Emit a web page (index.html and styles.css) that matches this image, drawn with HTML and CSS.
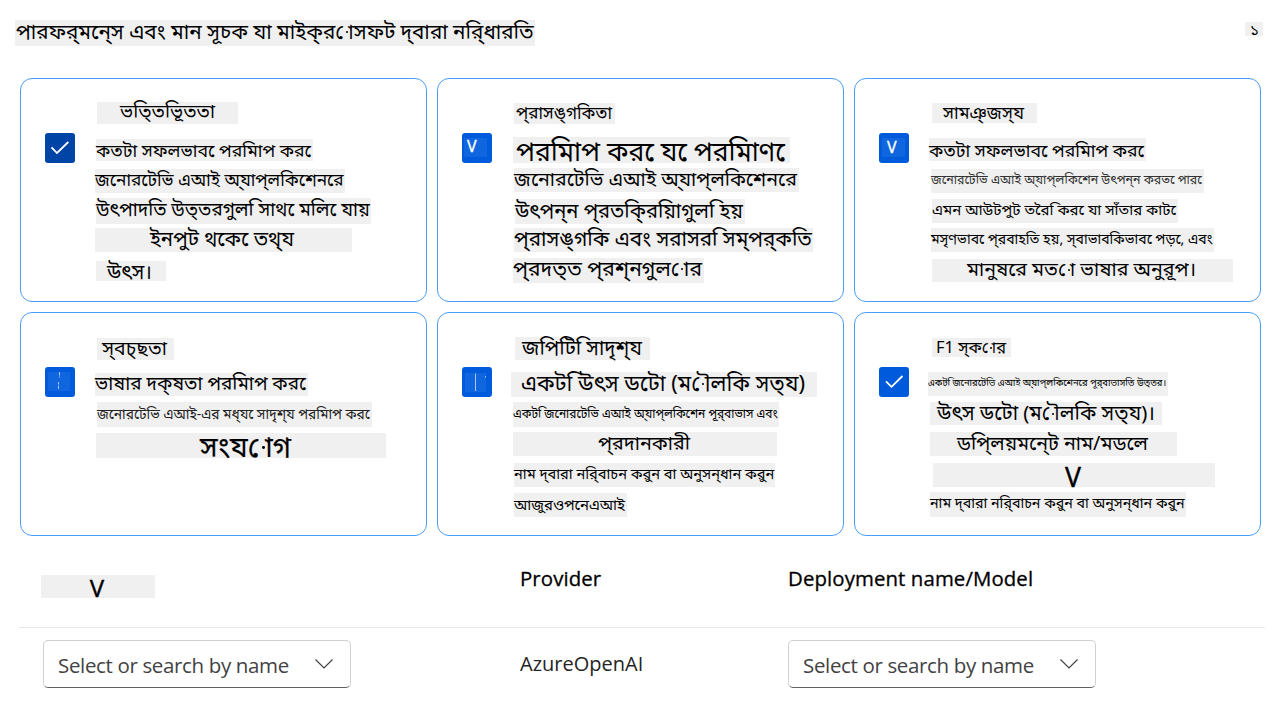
FILE: index.html
```html
<!DOCTYPE html>
<html lang="bn">
<head>
<meta charset="utf-8">
<title>পারফরমেন্স এবং মান সূচক</title>
<link rel="stylesheet" href="styles.css">
</head>
<body>
<header class="top">
  <h1 class="title">পারফর্&zwnj;মনে্স এবং মান সূচক যা মাইক্&zwnj;র<i class="o">&nbsp;ো</i>সফট দ্&zwnj;বারা নরি্ধারতি</h1>
  <span class="page">১</span>
</header>
<main class="cards">
  <section class="card">
    <span class="box dark"><svg viewBox="0 0 30 30"><path d="M6.500 14.300L12 20L23.300 9"/></svg></span>
    <div class="lines">
      <p class="a1">ভতি্তভিূততা</p>
      <p class="a2">কতটা সফলভাব&nbsp;েপরমিাপ কর<i class="e">&nbsp;ে</i></p>
      <p class="a3">জনোরটেভি এআই অ্&zwnj;যাপ্&zwnj;লকিশেনরে</p>
      <p class="a4">উৎপাদতি উত্&zwnj;তরগুল&nbsp;িসাথ&nbsp;েমলি&nbsp;েযায়</p>
      <p class="a5">ইনপুট থকে&nbsp;েতথ্&zwnj;য</p>
      <p class="a6">উৎস।</p>
    </div>
  </section>
  <section class="card">
    <span class="box"><b class="vee">V</b></span>
    <div class="lines">
      <p class="b1">প্&zwnj;রাসঙ্&zwnj;গকিতা</p>
      <p class="b2">পরমিাপ কর&nbsp;েয&nbsp;েপরমিাণ<i class="e">&nbsp;ে</i></p>
      <p class="b3">জনোরটেভি এআই অ্&zwnj;যাপ্&zwnj;লকিশেনরে</p>
      <p class="b4">উৎপন্&zwnj;ন প্&zwnj;রতকি্রয়িাগুল&nbsp;িহয়</p>
      <p class="b5">প্&zwnj;রাসঙ্&zwnj;গকি এবং সরাসর&nbsp;িসম্&zwnj;পর্&zwnj;কতি</p>
      <p class="b6">প্&zwnj;রদত্&zwnj;ত প্&zwnj;রশ্&zwnj;নগুল<i class="o">&nbsp;ো</i>র</p>
    </div>
  </section>
  <section class="card">
    <span class="box"><b class="vee right">V</b></span>
    <div class="lines">
      <p class="c1">সামঞ্&zwnj;জস্&zwnj;য</p>
      <p class="c2">কতটা সফলভাব&nbsp;েপরমিাপ কর<i class="e">&nbsp;ে</i></p>
      <p class="c3">জনোরটেভি এআই অ্&zwnj;যাপ্&zwnj;লকিশেন উৎপন্&zwnj;ন করত&nbsp;েপার<i class="e">&nbsp;ে</i></p>
      <p class="c4">এমন আউটপুট তরৈ&nbsp;িকর&nbsp;েযা সাঁতার কাট<i class="e">&nbsp;ে</i></p>
      <p class="c5">মসৃণভাব&nbsp;েপ্&zwnj;রবাহতি হয়, স্&zwnj;বাভাবকিভাব&nbsp;েপড়<i class="e">&nbsp;ে</i>, এবং</p>
      <p class="c6">মানুষরে মত<i class="o">&nbsp;ো</i> ভাষার অনুরূপ।</p>
    </div>
  </section>
  <section class="card">
    <span class="box"><svg viewBox="0 0 30 30"><rect class="patch" x="3" y="5" width="22" height="19"/><path class="thin" d="M14.500 5v3.500M14.500 9.500v1M13.500 15v2.500M13.500 18.500v3.500"/></svg></span>
    <div class="lines">
      <p class="d1">স্&zwnj;বচ্&zwnj;ছতা</p>
      <p class="d2">ভাষার দক্&zwnj;ষতা পরমিাপ কর<i class="e">&nbsp;ে</i></p>
      <p class="d3">জনোরটেভি এআই-এর মধ্&zwnj;য&nbsp;েসাদৃশ্&zwnj;য পরমিাপ কর<i class="e">&nbsp;ে</i></p>
      <p class="d4">সংয<i class="o">&nbsp;ো</i>গ</p>
    </div>
  </section>
  <section class="card">
    <span class="box"><svg viewBox="0 0 30 30"><rect class="patch" x="3" y="6" width="21" height="19"/><path class="thin" d="M13.500 6.500v17.500M23.500 9v1.500"/></svg></span>
    <div class="lines">
      <p class="e1">জপিটি&nbsp;িসাদৃশ্&zwnj;য</p>
      <p class="e2">একট&nbsp;িউৎস ডটো (ম<i class="o">&nbsp;ৌ</i>লকি সত্&zwnj;য)</p>
      <p class="e3">একট&nbsp;িজনোরটেভি এআই অ্&zwnj;যাপ্&zwnj;লকিশেন পূর্&zwnj;বাভাস এবং</p>
      <p class="e4">প্&zwnj;রদানকারী</p>
      <p class="e5">নাম দ্&zwnj;বারা নরি্বাচন করুন বা অনুসন্&zwnj;ধান করুন</p>
      <p class="e6">আজুরওপনেএআই</p>
    </div>
  </section>
  <section class="card">
    <span class="box"><svg viewBox="0 0 30 30"><path d="M7 14.300L12.500 19.800L23.500 9"/></svg></span>
    <div class="lines">
      <p class="f1">F1 স্&zwnj;ক<i class="o">&nbsp;ো</i>র</p>
      <p class="f2">একট&nbsp;িজনোরটেভি এআই অ্&zwnj;যাপ্&zwnj;লকিশেনরে পূর্&zwnj;বাভাসতি উত্&zwnj;তর।</p>
      <p class="f3">উৎস ডটো (ম<i class="o">&nbsp;ৌ</i>লকি সত্&zwnj;য)।</p>
      <p class="f4">ডপি্লয়মনে্ট নাম/মডলে</p>
      <p class="f5">V</p>
      <p class="f6">নাম দ্&zwnj;বারা নরি্বাচন করুন বা অনুসন্&zwnj;ধান করুন</p>
    </div>
  </section>
</main>
<section class="table" lang="en">
  <div class="row head">
    <div><span class="tag">V</span></div>
    <div class="th">Provider</div>
    <div class="th">Deployment name/Model</div>
  </div>
  <div class="row body">
    <div class="select"><span>Select or search by name</span><svg viewBox="0 0 18 10"><path d="M.5.500L9 9L17.500.500"/></svg></div>
    <div class="td">AzureOpenAI</div>
    <div class="select"><span>Select or search by name</span><svg viewBox="0 0 18 10"><path d="M.5.500L9 9L17.500.500"/></svg></div>
  </div>
</section>
</body>
</html>
```
FILE: styles.css
```css
* { box-sizing: border-box; }
body {
  margin: 0;
  font-family: "Noto Sans", "Noto Sans Bengali", sans-serif;
  color: #000;
  background: #fff;
  font-feature-settings: "blws" 0, "pres" 0, "psts" 0, "abvs" 0, "akhn" 0;
}
i { font-style: normal; }

/* detached vowel signs */
.e { margin-right: -.26em; }
.o { position: relative; }
.o::before {
  content: "";
  position: absolute;
  left: .5em;
  bottom: .56em;
  width: .1em;
  height: .1em;
  min-width: 2px;
  min-height: 2px;
  border-radius: 50%;
  background: #000;
}

.top { display: flex; justify-content: space-between; height: 78px; padding: 20px 25px 0 15px; }
.title, .page, .lines p {
  line-height: calc(2 * (var(--b) - .388em));
  white-space: nowrap;
  background: #f0f0f0;
}
.title { margin: 0; width: 520px; height: 26px; padding-left: 1px; font-size: 20.71px; font-weight: 400; --b: 20px; }
.page { width: 18px; height: 14px; margin-top: 2px; padding-left: 5px; font-size: 15px; --b: 14px; }

.cards { display: grid; grid-template-columns: repeat(3, 407px); grid-auto-rows: 224px; gap: 10px; padding-left: 20px; }
.card { display: flex; border: 1px solid #479ef5; border-radius: 12px; }
.box { flex: none; width: 30px; height: 30px; margin: 54px 19px 0 24px; background: #005bdc; border-radius: 3px; color: #fff; }
.box svg { display: block; width: 30px; height: 30px; }
.box path { fill: none; stroke: #fff; stroke-width: 1.8; }
.box .thin { stroke-width: 1; stroke: #a9c8f3; }
.patch { fill: #1066df; }
.dark { background: #0044a6; }
.vee { display: block; width: 23px; height: 19px; margin: 5px 0 0 2px; padding-left: 3px; background: #1066df; font-size: 16px; font-weight: 400; line-height: 17px; -webkit-text-stroke: .3px #fff; }
.vee.right { margin-left: 3px; padding-left: 5px; line-height: 19px; }

.lines p { margin: 0; }
.lines .a1 { margin: 23px 0 0 3px; width: 141px; height: 22px; padding-left: 23px; font-size: 18.89px; --b: 17px; }
.lines .a2 { margin: 15px 0 0 2px; width: 217px; height: 22px; font-size: 17.69px; --b: 18px; }
.lines .a3 { margin: 8px 0 0 1px; width: 250px; height: 24px; font-size: 17.25px; --b: 18px; }
.lines .a4 { margin: 5px 0 0 2px; width: 275px; height: 26px; font-size: 18.85px; --b: 19px; }
.lines .a5 { margin: 4px 0 0 1px; width: 257px; height: 24px; padding-left: 55px; font-size: 20.36px; --b: 18px; }
.lines .a6 { margin: 9px 0 0 2px; width: 70px; height: 20px; padding-left: 11px; font-size: 20.14px; --b: 18px; }

.lines .b1 { margin: 24px 0 0 3px; width: 101px; height: 21px; padding-left: 2px; font-size: 17.12px; --b: 16.5px; }
.lines .b2 { margin: 13px 0 0 2px; width: 277px; height: 26px; padding-left: 3px; font-size: 26.52px; --b: 25px; }
.lines .b3 { margin: 5px 0 0 3px; width: 285px; height: 24px; font-size: 19.64px; --b: 19px; }
.lines .b4 { margin: 7px 0 0 4px; width: 230px; height: 25px; font-size: 20.14px; --b: 19px; }
.lines .b5 { margin: 4px 0 0 3px; width: 299px; height: 24px; font-size: 20.58px; --b: 18px; }
.lines .b6 { margin: 6px 0 0 2px; width: 191px; height: 25px; font-size: 21.01px; --b: 19px; }

.lines .c1 { margin: 24px 0 0 4px; width: 105px; height: 20px; padding-left: 11px; font-size: 17.59px; --b: 16px; }
.lines .c2 { margin: 15px 0 0 1px; width: 217px; height: 23px; font-size: 17.69px; --b: 19px; }
.lines .c3 { margin: 8px 0 0 3px; width: 273px; height: 24px; font-size: 12.43px; color: #333; --b: 15.5px; }
.lines .c4 { margin: 6px 0 0 4px; width: 246px; height: 24px; font-size: 15.05px; --b: 16px; }
.lines .c5 { margin: 5px 0 0 3px; width: 283px; height: 24px; font-size: 14.05px; --b: 16px; }
.lines .c6 { margin: 7px 0 0 4px; width: 301px; height: 23px; padding-left: 35px; font-size: 19.59px; --b: 18px; }

.lines .d1 { margin: 25px 0 0 3px; width: 77px; height: 22px; padding-left: 5px; font-size: 19.47px; --b: 17.5px; }
.lines .d2 { margin: 13px 0 0 1px; width: 213px; height: 23px; font-size: 18.96px; --b: 18px; }
.lines .d3 { margin: 6px 0 0 3px; width: 275px; height: 25px; font-size: 13.78px; color: #222; --b: 17px; }
.lines .d4 { margin: 6px 0 0 2px; width: 290px; height: 25px; padding-left: 104px; font-size: 28.25px; --b: 24px; -webkit-text-stroke: .2px #000; }

.lines .e1 { margin: 24px 0 0 4px; width: 135px; height: 23px; padding-left: 7px; font-size: 20.23px; --b: 18px; }
.lines .e2 { margin: 12px 0 0 0; width: 306px; height: 25px; padding-left: 10px; font-size: 21.86px; --b: 19px; }
.lines .e3 { margin: 5px 0 0 2px; width: 266px; height: 25px; font-size: 11.98px; --b: 17px; }
.lines .e4 { margin: 5px 0 0 2px; width: 264px; height: 24px; padding-left: 85px; font-size: 19.71px; --b: 19px; }
.lines .e5 { margin: 7px 0 0 3px; width: 261px; height: 24px; font-size: 14.6px; --b: 16.5px; }
.lines .e6 { margin: 6px 0 0 3px; width: 113px; height: 24px; font-size: 14.88px; --b: 17px; }

.lines .f1 { margin: 25px 0 0 4px; width: 79px; height: 19px; padding-left: 4px; font-size: 16.41px; --b: 15px; }
.lines .f2 { margin: 15px 0 0 0; width: 240px; height: 24px; font-size: 9.38px; --b: 14.5px; }
.lines .f3 { margin: 6px 0 0 2px; width: 232px; height: 23px; padding-left: 7px; font-size: 20.26px; --b: 18px; }
.lines .f4 { margin: 7px 0 0 2px; width: 247px; height: 24px; padding-left: 27px; font-size: 19.69px; --b: 19px; }
.lines .f5 { margin: 7px 0 0 5px; width: 282px; height: 24px; padding-left: 132px; font-size: 26.67px; --b: 24px; -webkit-text-stroke: .3px #000; }
.lines .f6 { margin: 5px 0 0 2px; width: 256px; height: 25px; font-size: 14.28px; --b: 16.5px; }

.table { margin: 0 23px 0 19px; font-family: "Open Sans", "Noto Sans", sans-serif; font-size: 20px; }
.row { display: grid; grid-template-columns: 477px 268px 308px; padding-left: 24px; }
.head { height: 92px; border-bottom: 1px solid #e8e8e8; }
.tag { display: block; width: 114px; height: 23px; margin: 39px 0 0 -2px; background: #f0f0f0; text-align: center; padding-right: 2px; font: 24px/26px "Noto Sans", sans-serif; -webkit-text-stroke: .3px #000; }
.th { padding-top: 28px; line-height: 28px; font-size: 20.4px; -webkit-text-stroke: .3px #000; letter-spacing: .1px; }
.body { padding-top: 12px; }
.td { line-height: 48px; color: #242424; }
.select { display: flex; align-items: center; justify-content: space-between; width: 308px; height: 48px; padding: 2px 17px 0 14px; border: 1px solid #d1d1d1; border-bottom-color: #616161; border-radius: 5px; color: #424242; font-size: 20.5px; letter-spacing: -.35px; white-space: nowrap; }
.select svg { width: 18px; height: 10px; margin-top: -3px; fill: none; stroke: #424242; stroke-width: 1.2; }
```
